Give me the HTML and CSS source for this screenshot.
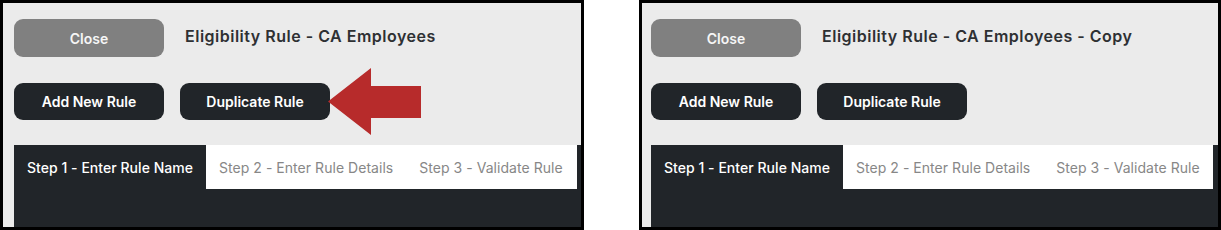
FILE: index.html
```html
<!DOCTYPE html>
<html>
<head>
  <meta charset="utf-8">
  <link rel="stylesheet" href="styles.css">
</head>
<body>
  <div class="shots">
    <div class="panel">
      <div class="top-row">
        <button class="btn btn-close">Close</button>
        <span class="rule-title">Eligibility Rule - CA Employees</span>
      </div>
      <div class="action-row">
        <button class="btn btn-dark">Add New Rule</button>
        <button class="btn btn-dark">Duplicate Rule</button>
      </div>
      <div class="wizard">
        <div class="tabs">
          <div class="tab active">Step 1 - Enter Rule Name</div>
          <div class="tab">Step 2 - Enter Rule Details</div>
          <div class="tab">Step 3 - Validate Rule</div>
        </div>
      </div>
      <!-- callout arrow pointing at the duplicate button -->
      <svg class="callout" width="93" height="67" viewBox="0 0 93 67">
        <polygon points="0,33.5 43,0 43,18 93,18 93,50 43,50 43,67" fill="#b72b2b"/>
      </svg>
    </div>

    <div class="panel panel-copy">
      <div class="top-row">
        <button class="btn btn-close">Close</button>
        <span class="rule-title">Eligibility Rule - CA Employees - Copy</span>
      </div>
      <div class="action-row">
        <button class="btn btn-dark">Add New Rule</button>
        <button class="btn btn-dark">Duplicate Rule</button>
      </div>
      <div class="wizard">
        <div class="tabs">
          <div class="tab active">Step 1 - Enter Rule Name</div>
          <div class="tab">Step 2 - Enter Rule Details</div>
          <div class="tab">Step 3 - Validate Rule</div>
        </div>
      </div>
    </div>
  </div>
</body>
</html>
```

FILE: styles.css
```css
* {
  margin: 0;
  padding: 0;
  box-sizing: border-box;
}

body {
  width: 1221px;
  height: 230px;
  background: #ffffff;
  font-family: 'Inter', 'Noto Sans', sans-serif;
  overflow: hidden;
}

.shots {
  display: flex;
  gap: 55px;
  height: 230px;
}

.panel {
  position: relative;
  width: 584px;
  height: 230px;
  background: #ebebeb;
  border: 3px solid #000;
  padding: 16px 0 0 11px;
  display: flex;
  flex-direction: column;
  overflow: hidden;
}

.panel-copy {
  width: 582px;
  padding-left: 9px;
}

.top-row {
  display: flex;
  align-items: flex-start;
  gap: 21px;
}

.rule-title {
  padding-top: 7px;
  font-size: 16px;
  font-weight: 600;
  color: #2e3033;
  letter-spacing: 0.5px;
}

.action-row {
  display: flex;
  gap: 16px;
  margin-top: 26px;
}

.btn {
  width: 150px;
  height: 37px;
  border: none;
  border-radius: 9px;
  font-family: inherit;
  font-size: 14px;
  font-weight: 600;
  color: #fff;
  cursor: pointer;
}

.btn-close {
  height: 38px;
  background: #808080;
  color: #f6f6f6;
}

.btn-dark {
  background: #212529;
}

.wizard {
  flex: 1;
  margin-top: 25px;
  background: #212529;
}

.tabs {
  display: flex;
  height: 44px;
  margin-right: 4px;
  background: #ffffff;
}

.panel-copy .tabs {
  margin-right: 5px;
}

.tab {
  display: flex;
  align-items: center;
  flex-shrink: 0;
  padding: 0 13px;
  font-size: 14px;
  letter-spacing: 0.04px;
  white-space: nowrap;
  color: #878787;
}

.tab.active {
  background: #212529;
  color: #ffffff;
  font-weight: 500;
}

.callout {
  position: absolute;
  left: 325px;
  top: 65px;
  pointer-events: none;
}
```
